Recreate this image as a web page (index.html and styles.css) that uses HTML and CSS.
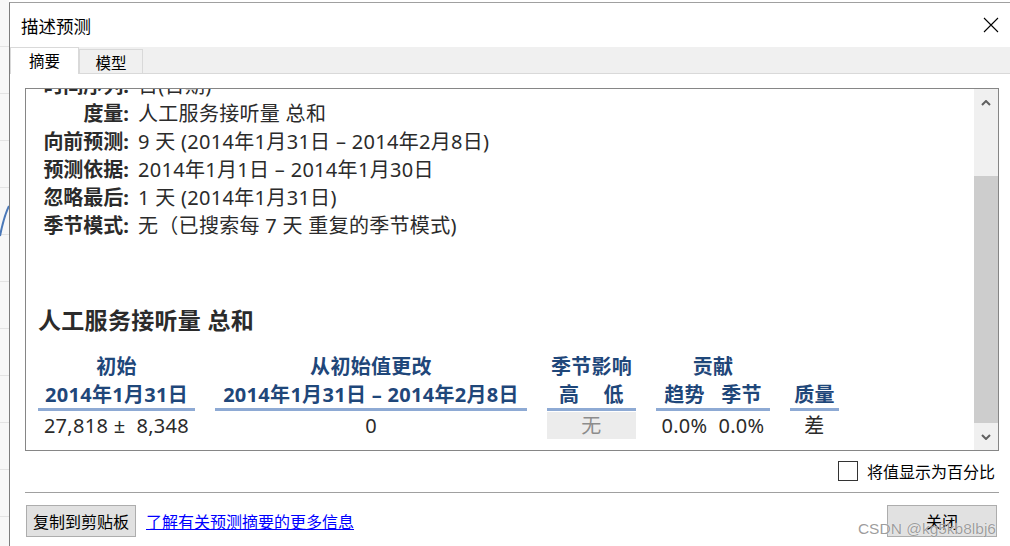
FILE: index.html
```html
<!doctype html>
<html lang="zh-CN">
<head>
    <meta charset="UTF-8">
    <title>描述预测</title>
    <link rel="stylesheet" href="styles.css">
</head>
<body>
    <div class="sheet">
        <svg width="9" height="546" viewBox="0 0 9 546">
            <path d="M0 236 C2 226 5 214 9 206" fill="none" stroke="#4a78b8" stroke-width="2"/>
        </svg>
    </div>
    <div class="dialog">
        <div class="titlebar">
            <span class="title">描述预测</span>
            <svg class="close-x" width="16" height="16" viewBox="0 0 16 16">
                <path d="M1 1 L15 15 M15 1 L1 15" stroke="#000" stroke-width="1.1"/>
            </svg>
        </div>
        <div class="tabs">
            <span class="tab on">摘要</span>
            <span class="tab">模型</span>
        </div>
        <div class="content">
            <div class="panel">
                <div class="panel-main">
                    <div class="summary">
                        <span class="key">时间序列:</span><span>日(日期)</span>
                        <span class="key">度量:</span><span>人工服务接听量 总和</span>
                        <span class="key">向前预测:</span><span>9 天 (2014年1月31日 – 2014年2月8日)</span>
                        <span class="key">预测依据:</span><span>2014年1月1日 – 2014年1月30日</span>
                        <span class="key">忽略最后:</span><span>1 天 (2014年1月31日)</span>
                        <span class="key">季节模式:</span><span>无（已搜索每 7 天 重复的季节模式)</span>
                    </div>
                    <h2 class="heading">人工服务接听量 总和</h2>
                    <div class="table">
                        <div class="th">初始</div>
                        <div class="th">从初始值更改</div>
                        <div class="th">季节影响</div>
                        <div class="th">贡献</div>
                        <div class="th"></div>

                        <div class="th sub">2014年1月31日</div>
                        <div class="th sub">2014年1月31日 – 2014年2月8日</div>
                        <div class="th sub split"><span>高</span><span>低</span></div>
                        <div class="th sub split"><span>趋势</span><span>季节</span></div>
                        <div class="th sub">质量</div>

                        <div class="td">27,818 ±&nbsp; 8,348</div>
                        <div class="td">0</div>
                        <div class="td none">无</div>
                        <div class="td split"><span>0.0%</span><span>0.0%</span></div>
                        <div class="td">差</div>
                    </div>
                </div>
                <div class="scrollbar">
                    <div class="sb-btn up">
                        <svg width="10" height="6" viewBox="0 0 10 6"><polyline points="1,5 5,1 9,5" fill="none" stroke="#606060" stroke-width="2"/></svg>
                    </div>
                    <div class="sb-space"></div>
                    <div class="sb-thumb"></div>
                    <div class="sb-btn down">
                        <svg width="10" height="6" viewBox="0 0 10 6"><polyline points="1,1 5,5 9,1" fill="none" stroke="#606060" stroke-width="2"/></svg>
                    </div>
                </div>
            </div>
            <label class="options">
                <span class="check"></span>
                <span>将值显示为百分比</span>
            </label>
            <div class="sep"></div>
            <div class="actions">
                <span class="btn">复制到剪贴板</span>
                <a href="javascript:;" class="more">了解有关预测摘要的更多信息</a>
                <span class="btn close">关闭</span>
            </div>
        </div>
        <span class="watermark">CSDN @kg5kb8lbj6</span>
    </div>
</body>
</html>
```

FILE: styles.css
```css
*{
    margin: 0;
    padding: 0;
    box-sizing: border-box;
}
body{
    width: 1010px;
    height: 546px;
    overflow: hidden;
    display: flex;
    padding-top: 2px;
    background: #fff;
    font-family: "Noto Sans", "Noto Sans CJK SC", sans-serif;
    color: #333;
}
.sheet{
    width: 9px;
    flex: none;
    margin-top: -2px;
    background: repeating-linear-gradient(to bottom, #f7f7f7 0, #f7f7f7 46px, #e3e3e3 46px, #e3e3e3 47px);
}
.sheet svg{
    display: block;
}
.dialog{
    flex: 1;
    position: relative;
    display: flex;
    flex-direction: column;
    background: #fff;
    border-left: 1px solid #7d7d7d;
    border-top: 1px solid #a0a0a0;
}
.titlebar{
    height: 44px;
    flex: none;
    display: flex;
    align-items: center;
    justify-content: space-between;
    padding: 0 11px;
    font-family: "Noto Sans CJK SC", sans-serif;
    font-size: 17.5px;
    color: #000;
}
.tabs{
    height: 27px;
    flex: none;
    display: flex;
    align-items: flex-end;
    background: #f0f0f0;
    border-bottom: 1px solid #d9d9d9;
}
.tab{
    width: 64px;
    height: 24px;
    padding-top: 1px;
    text-align: center;
    font-family: "Noto Sans CJK SC", sans-serif;
    font-size: 15.5px;
    line-height: 22px;
    color: #000;
    background: #f0f0f0;
    border: 1px solid #d9d9d9;
    border-bottom: none;
}
.tab.on{
    width: 69px;
    height: 27px;
    padding-top: 1px;
    margin-bottom: -1px;
    background: #fff;
    position: relative;
    z-index: 1;
}
.content{
    flex: 1;
    padding: 14px 11px 0 15px;
}
.panel{
    height: 363px;
    display: flex;
    border: 1px solid #868686;
}
.panel-main{
    flex: 1;
    overflow: hidden;
    font-size: 20px;
    letter-spacing: 0.3px;
}
.summary{
    display: grid;
    grid-template-columns: 103px auto;
    column-gap: 9px;
    margin-top: -17px;
    line-height: 28px;
    color: #2b2b2b;
}
.summary .key{
    text-align: right;
    font-weight: 700;
    letter-spacing: 0;
}
.heading{
    margin: 65px 0 0 12px;
    font-size: 23px;
    line-height: 30px;
    font-weight: 700;
    color: #2b2b2b;
}
.table{
    display: grid;
    grid-template-columns: 157px 312px 89px 114px 49px;
    column-gap: 20px;
    margin: 18px 0 0 12px;
    text-align: center;
}
.th{
    font-weight: 700;
    color: #1f477a;
    line-height: 28px;
    white-space: nowrap;
}
.th.sub{
    line-height: 27px;
    border-bottom: 3px solid #8eaad4;
}
.td{
    margin-top: 1px;
    line-height: 27px;
    color: #2b2b2b;
    white-space: nowrap;
}
.td.none{
    background: #ececec;
    color: #8c8c8c;
}
.split{
    display: flex;
}
.split span{
    flex: 1;
}
.scrollbar{
    width: 24px;
    flex: none;
    display: flex;
    flex-direction: column;
    background: #f0f0f0;
}
.sb-btn{
    display: flex;
    align-items: center;
    justify-content: center;
}
.sb-btn svg{
    display: block;
}
.sb-btn.up{
    height: 28px;
}
.sb-space{
    height: 59px;
}
.sb-thumb{
    height: 247px;
    background: #cdcdcd;
}
.sb-btn.down{
    flex: 1;
}
.options{
    display: flex;
    align-items: center;
    justify-content: flex-end;
    gap: 9px;
    height: 20px;
    margin-top: 10px;
    padding-right: 4px;
    font-family: "Noto Sans CJK SC", sans-serif;
    font-size: 16px;
    color: #000;
}
.check{
    width: 20px;
    height: 20px;
    border: 1px solid #333;
    background: #fff;
}
.sep{
    height: 1px;
    margin-top: 11px;
    background: #a0a0a0;
}
.actions{
    display: flex;
    align-items: center;
    margin-top: 12px;
    font-family: "Noto Sans CJK SC", sans-serif;
    font-size: 16px;
}
.btn{
    width: 110px;
    height: 32px;
    margin-left: 1px;
    display: flex;
    align-items: center;
    justify-content: center;
    background: #e1e1e1;
    border: 1px solid #adadad;
    color: #000;
}
.btn.close{
    margin-left: auto;
    margin-right: 2px;
}
.more{
    margin-left: 10px;
    color: #0000ff;
    text-decoration: underline;
}
.watermark{
    position: absolute;
    right: 14px;
    bottom: 9px;
    font-family: "Liberation Sans", sans-serif;
    font-size: 15.5px;
    line-height: 17px;
    color: rgba(140,140,140,0.85);
    text-shadow: 0 0 1px #fff;
}
```
